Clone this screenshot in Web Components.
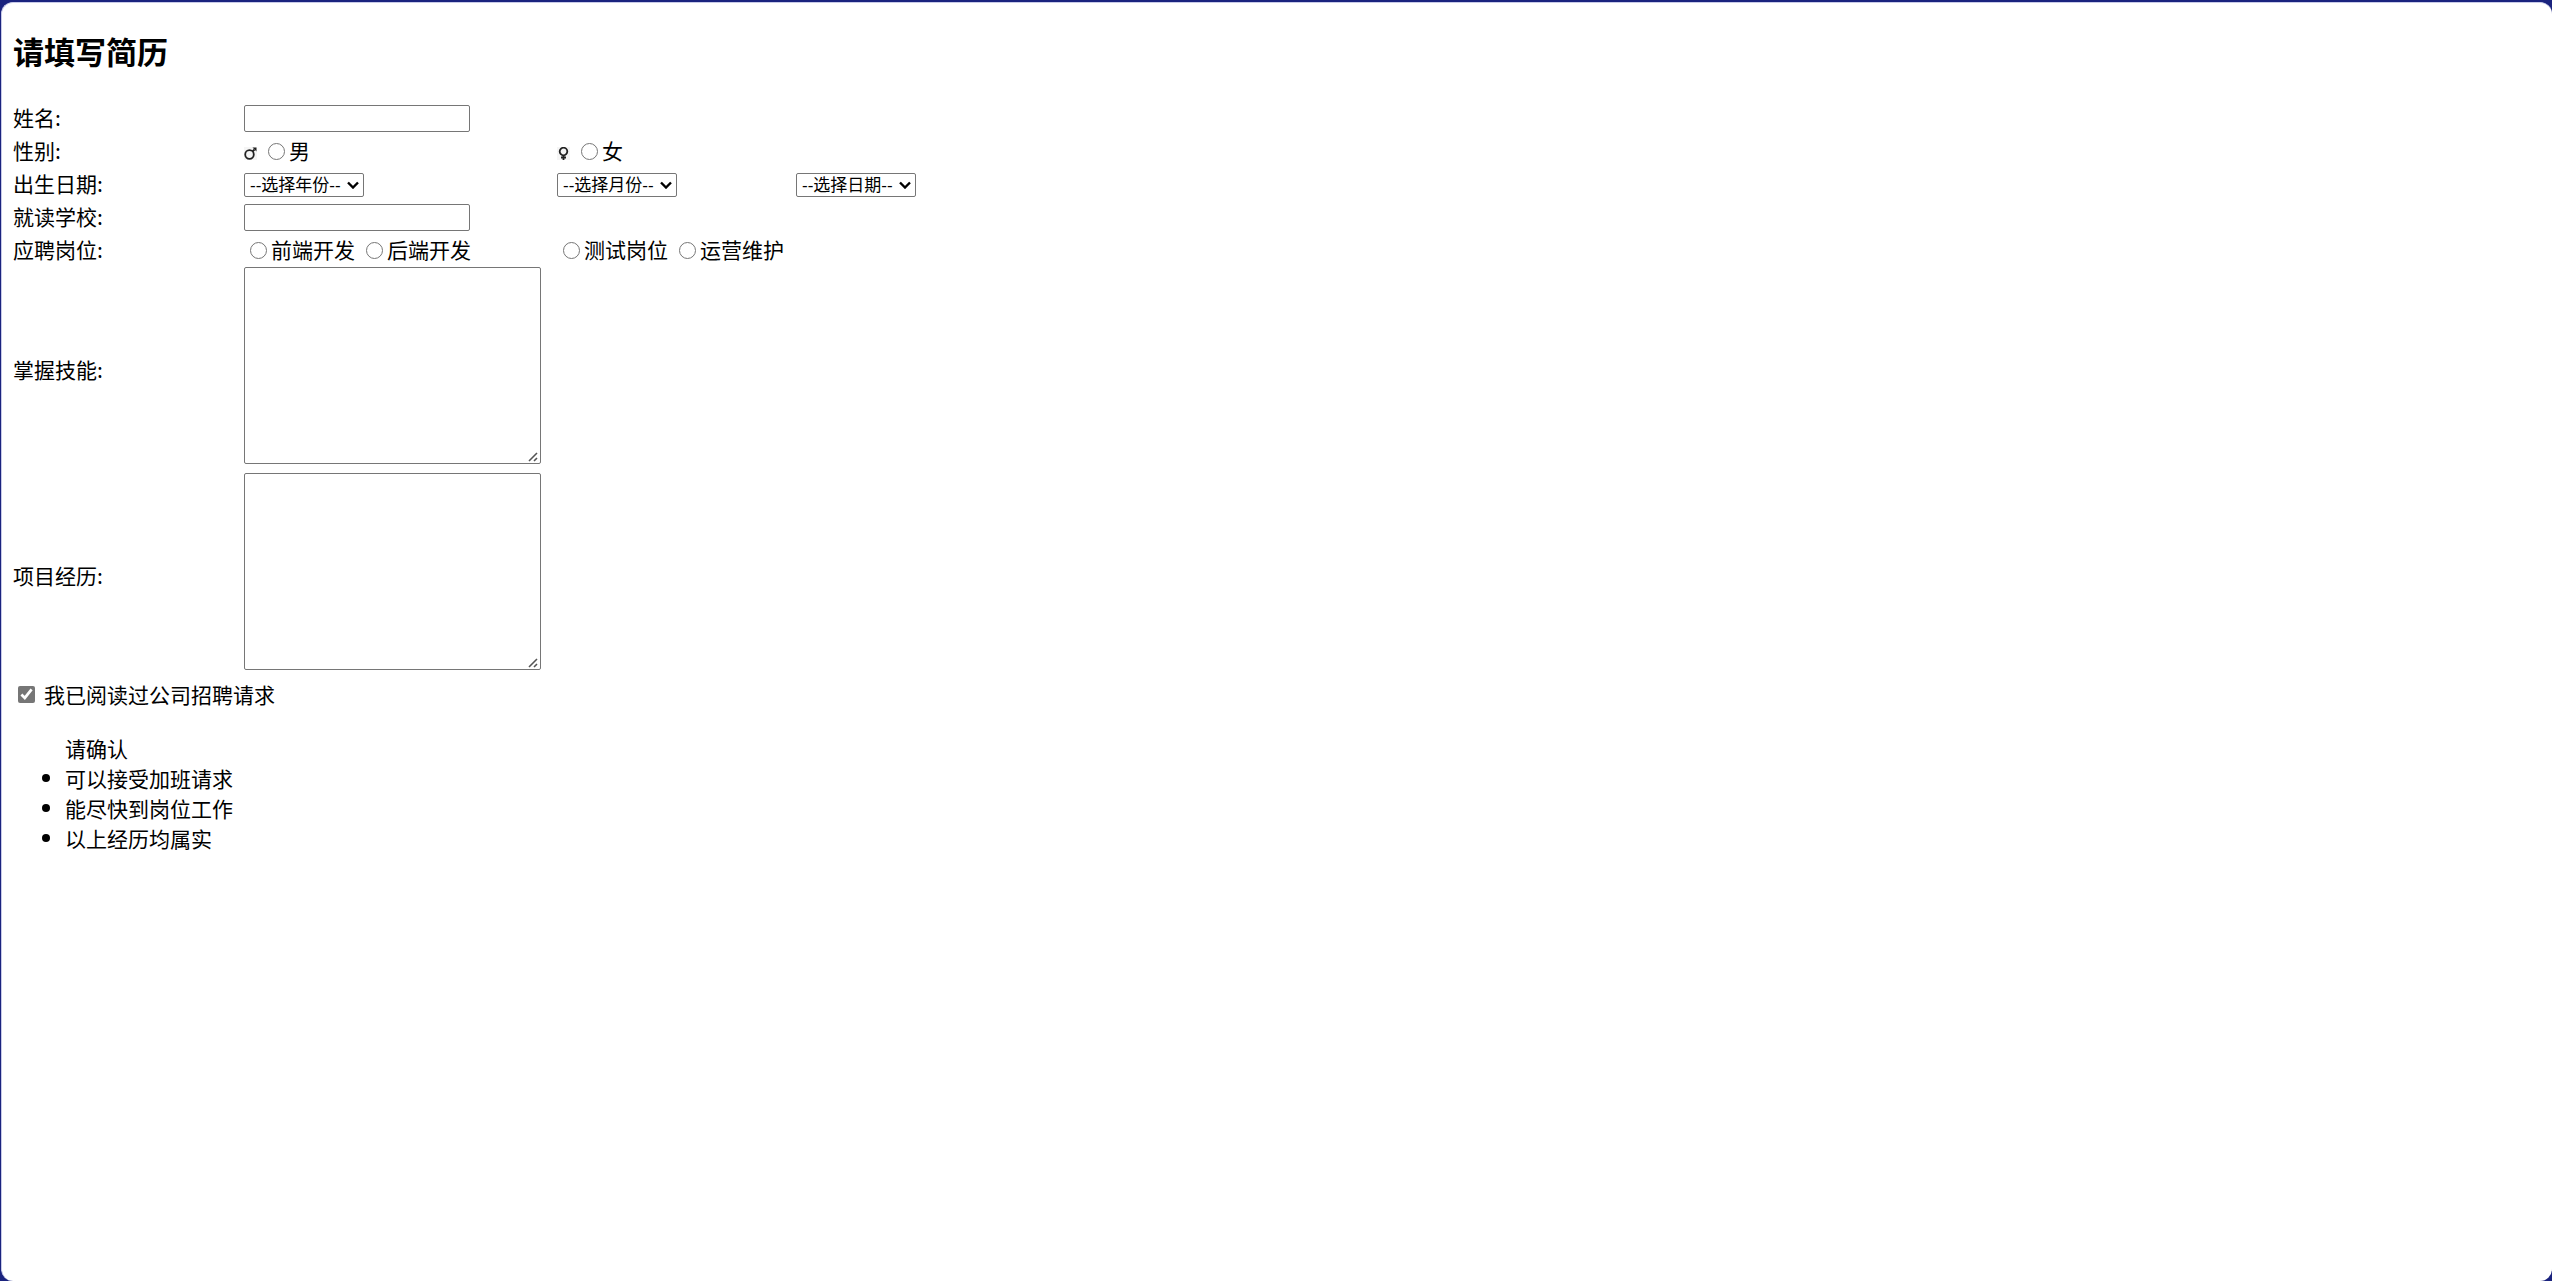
<!DOCTYPE html>
<html lang="zh-CN">
<head>
<meta charset="utf-8">
<title>请填写简历</title>
<style>
html { height: 100%; background: #1a237e; }
body {
  box-sizing: border-box; min-height: 100%; margin: 0; padding: 2px 0 0 1px;
  display: flex; font-family: "Liberation Sans", "Noto Sans CJK SC", sans-serif;
  font-size: 21px; line-height: 30px; color: #000;
}
</style>
</head>
<body>
<resume-page></resume-page>

<template id="page-template">
  <style>
    :host { flex: 1; display: block; box-sizing: border-box; padding: 0 11px; background: #fff; border: solid #c8cae8; border-width: 1px 0 0 1px; border-radius: 12px; }
    h2 { margin: 0; padding: 28px 0 25px; font-size: 31px; line-height: 46px; }
    label { font-family: "Noto Sans CJK SC", sans-serif; }
    input, textarea { box-sizing: border-box; margin: 0; border: 1px solid #767676; border-radius: 2px; background: #fff; font: 17px "Liberation Sans", "Noto Sans CJK SC", sans-serif; }
    input[type=text] { width: 226px; height: 27px; }
    textarea { display: block; width: 297px; height: 197px; }
    textarea::-webkit-resizer { background: url("data:image/svg+xml,%3Csvg xmlns='http://www.w3.org/2000/svg' width='15' height='15'%3E%3Cpath d='M4 13L12 5M9 13L12 10' stroke='%23555' stroke-width='1.6' fill='none'/%3E%3C/svg%3E") no-repeat right bottom; }
    input[type=checkbox] { width: 17px; height: 17px; margin: 0 9px 0 5px; accent-color: #767676; }
    .agree { display: flex; align-items: center; height: 30px; }
  </style>
  <form>
    <h2>请填写简历</h2>
    <form-row><label slot="label" for="name">姓名:</label><input id="name" type="text"></form-row>
    <form-row>
      <span slot="label">性别:</span>
      <radio-set name="sex" options="男" icon="male"></radio-set>
      <radio-set name="sex" options="女" icon="female"></radio-set>
    </form-row>
    <form-row>
      <span slot="label">出生日期:</span>
      <drop-down text="--选择年份--" caption="年份"></drop-down>
      <drop-down text="--选择月份--" caption="月份"></drop-down>
      <drop-down text="--选择日期--" caption="日期"></drop-down>
    </form-row>
    <form-row><label slot="label" for="school">就读学校:</label><input id="school" type="text"></form-row>
    <form-row>
      <span slot="label">应聘岗位:</span>
      <radio-set name="job" options="前端开发,后端开发"></radio-set>
      <radio-set name="job" options="测试岗位,运营维护"></radio-set>
    </form-row>
    <form-row tall><label slot="label" for="skills">掌握技能:</label><textarea id="skills"></textarea></form-row>
    <form-row tall><label slot="label" for="projects">项目经历:</label><textarea id="projects"></textarea></form-row>
    <div class="agree"><input id="agree" type="checkbox" checked><label for="agree">我已阅读过公司招聘请求</label></div>
  </form>
  <confirm-list>
    <span slot="title">请确认</span>
    <span>可以接受加班请求</span>
    <span>能尽快到岗位工作</span>
    <span>以上经历均属实</span>
  </confirm-list>
</template>

<template id="row-template">
  <style>
    :host { display: grid; grid-template-columns: 231px 313px 239px 1fr; align-items: center; height: 33px; font-family: "Noto Sans CJK SC", sans-serif; }
    :host([tall]) { height: 206px; align-items: start; }
    slot[name=label]::slotted(*) { padding-bottom: 3px; }
    :host([tall]) slot[name=label]::slotted(*) { align-self: center; }
  </style>
  <slot name="label"></slot><slot></slot>
</template>

<template id="list-template">
  <style>
    :host { display: block; margin-top: 24px; font-family: "Noto Sans CJK SC", sans-serif; }
    ul { margin: 0; padding: 0; list-style: none; }
    p { margin: 0; padding-left: 52px; }
    li { display: flex; align-items: center; }
    li::before { content: ""; width: 8px; height: 8px; margin: 0 15px 0 29px; border-radius: 50%; background: #000; }
  </style>
  <p><slot name="title"></slot></p>
  <ul></ul>
</template>

<script>
const cloneInto = (host, id) => {
  const root = host.attachShadow({ mode: 'open' });
  root.append(document.getElementById(id).content.cloneNode(true));
  return root;
};

customElements.define('form-row', class extends HTMLElement {
  connectedCallback() { if (!this.shadowRoot) cloneInto(this, 'row-template'); }
});

const ICONS = {
  male: '<circle cx="5.5" cy="7.500" r="4.300"/><path d="M8.500 4.500l2-2"/><path d="M8.500 .5h4v4z" fill="#222" stroke="none"/>',
  female: '<circle cx="6.5" cy="4.5" r="3.8"/><path d="M6.500 8.500v4.500M4 10.500h5"/>'
};

/* One or more radio buttons; sets with the same name exclude each other. */
customElements.define('radio-set', class extends HTMLElement {
  connectedCallback() {
    if (this.shadowRoot) return;
    const name = this.getAttribute('name'), icon = this.getAttribute('icon');
    const root = this.attachShadow({ mode: 'open' });
    root.innerHTML = `<style>
      :host { display: flex; align-items: center; gap: 11px; padding-left: 6px; }
      :host([icon]) { padding-left: 0; }
      label { display: flex; align-items: center; gap: 4px; white-space: nowrap; }
      span { padding-bottom: 3px; }
      input { width: 17px; height: 17px; margin: 0 0 1px; }
      svg { width: 13px; height: 13px; margin-top: 3px; background: #f5f5f5; fill: none; stroke: #222; stroke-width: 1.8; }
    </style>${icon ? `<svg viewBox="0 0 13 13" aria-hidden="true">${ICONS[icon]}</svg>` : ''}` +
      this.getAttribute('options').split(',').map(o =>
        `<label><input type="radio" name="${name}" value="${o}"><span>${o}</span></label>`).join('');
    root.addEventListener('change', () => {
      this.getRootNode().querySelectorAll(`radio-set[name=${name}]`).forEach(s => {
        if (s !== this) s.shadowRoot.querySelectorAll('input').forEach(i => { i.checked = false; });
      });
    });
  }
});

customElements.define('drop-down', class extends HTMLElement {
  connectedCallback() {
    if (this.shadowRoot) return;
    this.attachShadow({ mode: 'open' }).innerHTML = `<style>
      :host { display: grid; width: 120px; align-items: center; padding-top: 1px; }
      select, svg { grid-area: 1 / 1; }
      select { appearance: none; box-sizing: border-box; width: 120px; height: 24px; margin: 0; padding: 1px 0 0 5px; border: 1px solid #767676; border-radius: 2px; background: #fff; color: #000; font: 17px "Liberation Sans", "Noto Sans CJK SC", sans-serif; }
      svg { justify-self: end; width: 12px; height: 8px; margin-right: 5px; pointer-events: none; fill: none; stroke: #000; stroke-width: 2.4; }
    </style>
    <select aria-label="${this.getAttribute('caption')}"><option>${this.getAttribute('text')}</option></select>
    <svg viewBox="0 0 12 8" aria-hidden="true"><path d="M1 1.500l5 5 5-5"/></svg>`;
  }
});

customElements.define('confirm-list', class extends HTMLElement {
  connectedCallback() {
    if (this.shadowRoot) return;
    const ul = cloneInto(this, 'list-template').querySelector('ul');
    this.querySelectorAll(':scope > :not([slot])').forEach((item, i) => {
      item.slot = 'item' + i;
      const li = document.createElement('li');
      li.innerHTML = `<slot name="item${i}"></slot>`;
      ul.append(li);
    });
  }
});

customElements.define('resume-page', class extends HTMLElement {
  connectedCallback() { if (!this.shadowRoot) cloneInto(this, 'page-template'); }
});
</script>
</body>
</html>
